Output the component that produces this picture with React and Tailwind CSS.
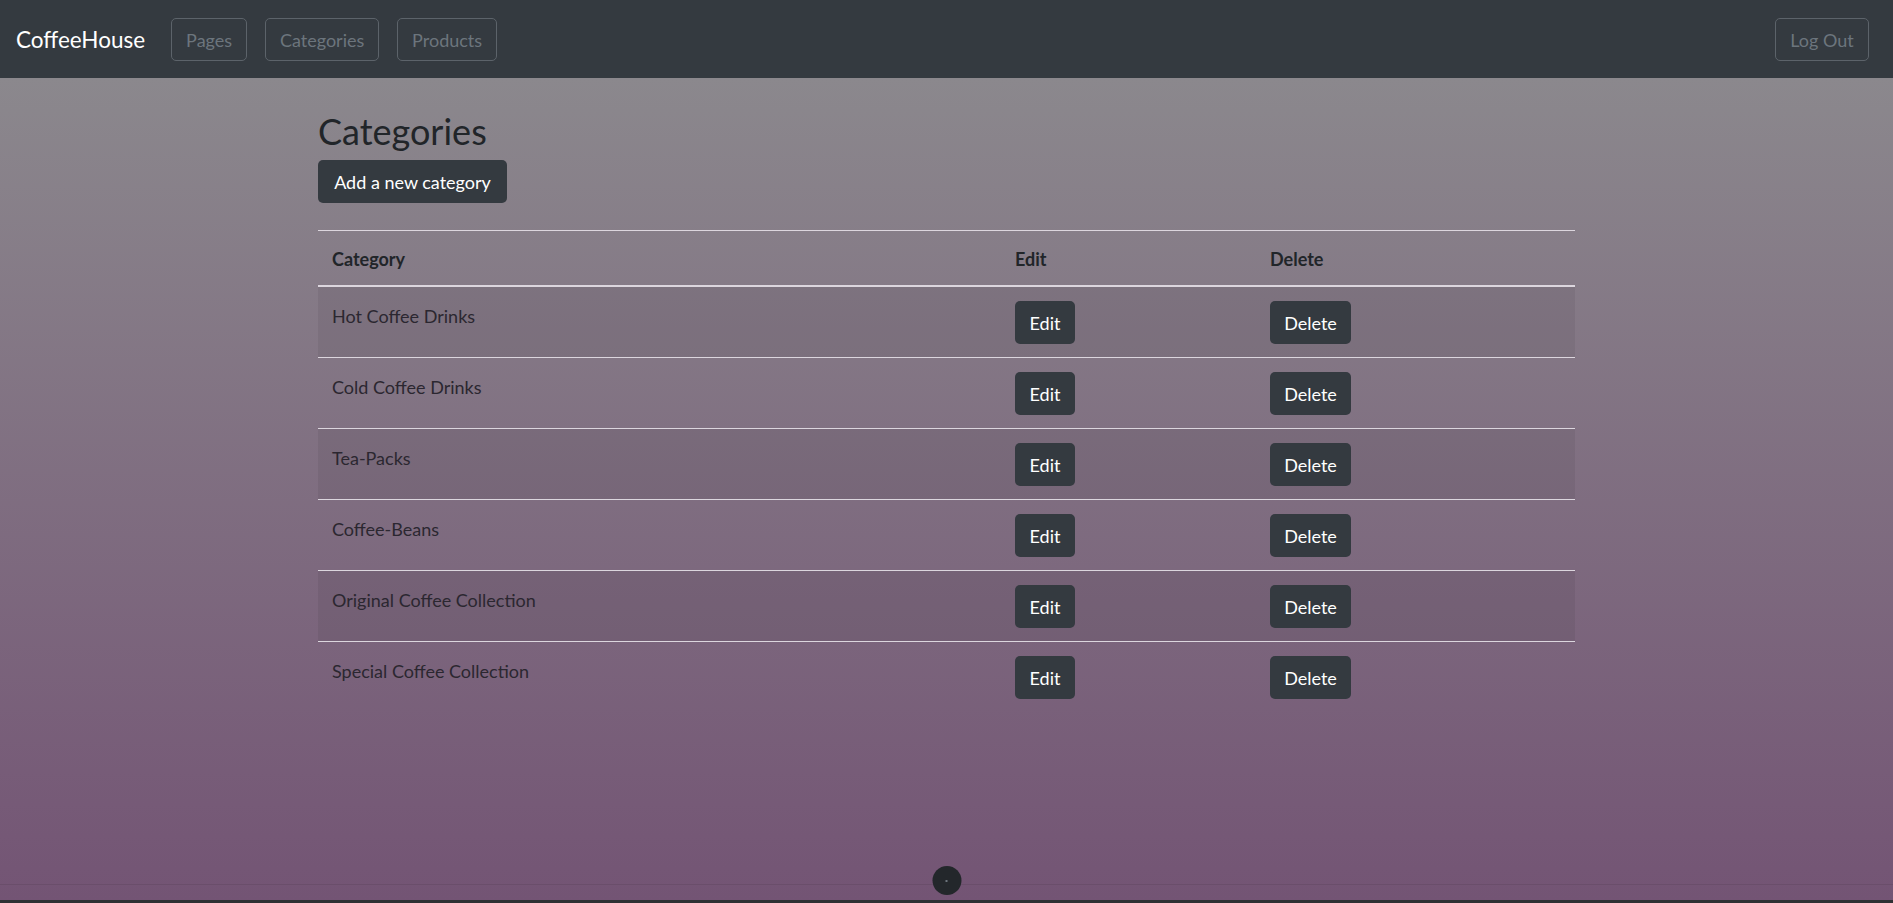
import React from 'react';

const categories = [
  'Hot Coffee Drinks',
  'Cold Coffee Drinks',
  'Tea-Packs',
  'Coffee-Beans',
  'Original Coffee Collection',
  'Special Coffee Collection',
];

function NavButton({ label, width }) {
  return (
    <button
      className={`h-[43px] ${width} pt-[2px] rounded-[5px] border border-[#5c636a] text-[18px] leading-[27px] text-[#6c757d] flex items-center justify-center`}
    >
      {label}
    </button>
  );
}

export default function App() {
  return (
    <div className="min-h-screen flex flex-col font-['Lato','Noto_Sans',sans-serif] text-[#212529]">
      {/* Navbar */}
      <nav className="h-[78px] shrink-0 bg-[#343a40] flex items-center justify-between pl-[16px] pr-[24px]">
        <div className="flex items-center">
          <span className="text-[22.5px] pt-[2px] text-white mr-[26px]">CoffeeHouse</span>
          <div className="flex items-center gap-[18px]">
            <NavButton label="Pages" width="w-[76px]" />
            <NavButton label="Categories" width="w-[114px]" />
            <NavButton label="Products" width="w-[100px]" />
          </div>
        </div>
        <NavButton label="Log Out" width="w-[94px]" />
      </nav>

      <div className="flex-1 flex flex-col bg-gradient-to-b from-[#8b888d] to-[#735474]">
        {/* Main */}
        <main className="flex-1 pt-[32px]">
          <div className="w-[1257px] mx-auto">
            <h1 className="text-[36px] leading-[43px] mb-[7px] text-[#212529]">Categories</h1>
            <button className="h-[43px] w-[189px] pt-[2px] rounded-[5px] bg-[#343a40] text-white text-[18px] leading-[27px] flex items-center justify-center">
              Add a new category
            </button>

            <table className="mt-[27px] w-[1257px] border-collapse text-[18px] leading-[27px] text-left">
              <thead>
                <tr className="border-t border-[#dcd6de] border-b-2 border-b-[#dcd6de]">
                  <th className="w-[683px] px-[14px] pt-[15px] pb-[12px] font-bold">Category</th>
                  <th className="w-[255px] px-[14px] pt-[15px] pb-[12px] font-bold">Edit</th>
                  <th className="w-[319px] px-[14px] pt-[15px] pb-[12px] font-bold">Delete</th>
                </tr>
              </thead>
              <tbody>
                {categories.map((name, i) => (
                  <tr
                    key={name}
                    className={`${i > 0 ? 'border-t border-[#dcd6de]' : ''} ${i % 2 === 0 ? 'bg-[rgba(0,0,0,0.06)]' : ''}`}
                  >
                    <td className="px-[14px] pt-[16px] pb-[11px] align-top text-[#2b2730]">{name}</td>
                    <td className="px-[14px] pt-[14px] pb-[13px] align-top">
                      <button className="h-[43px] w-[60px] pt-[2px] rounded-[5px] bg-[#343a40] text-white flex items-center justify-center">
                        Edit
                      </button>
                    </td>
                    <td className="px-[14px] pt-[14px] pb-[13px] align-top">
                      <button className="h-[43px] w-[81px] pt-[2px] rounded-[5px] bg-[#343a40] text-white flex items-center justify-center">
                        Delete
                      </button>
                    </td>
                  </tr>
                ))}
              </tbody>
            </table>
          </div>
        </main>

        {/* Footer */}
        <footer className="relative h-[16px] border-t border-[rgba(0,0,0,0.08)]">
          <div className="absolute left-1/2 -translate-x-1/2 top-[-19px] w-[29px] h-[29px] rounded-full bg-[#23272b] flex items-center justify-center">
            <span className="w-[2px] h-[2px] bg-[#6c757d]"></span>
          </div>
        </footer>
      </div>
      <div className="h-[3px] shrink-0 bg-[#2f3033]"></div>
    </div>
  );
}
